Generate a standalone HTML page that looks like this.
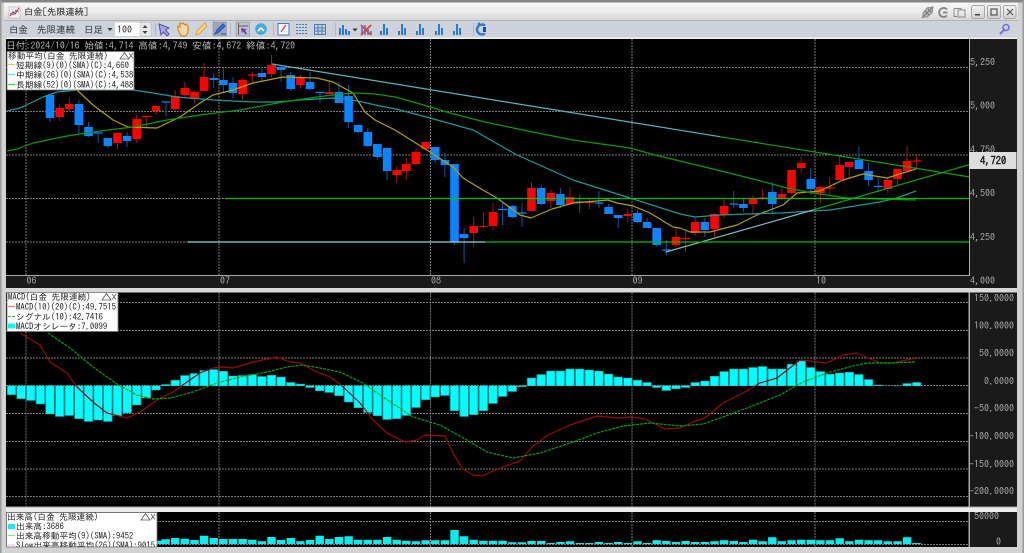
<!DOCTYPE html>
<html lang="ja"><head><meta charset="utf-8"><title>白金[先限連続]</title>
<style>
html,body{margin:0;padding:0;width:1024px;height:553px;overflow:hidden;background:#d4d4d4}
svg{display:block;position:absolute;left:0;top:0;filter:blur(.3px)}
text{font-family:"IPAGothic","Liberation Sans","Noto Sans CJK JP",sans-serif}
.ax{fill:#a8a8a8;font-size:10px}
.lg{fill:#222;font-size:8.7px}
.tb{fill:#333;font-size:9.5px}
</style></head><body>
<svg width="1024" height="553" viewBox="0 0 1024 553" xmlns="http://www.w3.org/2000/svg">
<defs>
<linearGradient id="tg" x1="0" y1="0" x2="0" y2="1"><stop offset="0" stop-color="#f6f6f6"/><stop offset=".5" stop-color="#ececec"/><stop offset="1" stop-color="#d6d6d6"/></linearGradient>
<linearGradient id="bt" x1="0" y1="0" x2="0" y2="1"><stop offset="0" stop-color="#f4f4f4"/><stop offset="1" stop-color="#cfcfcf"/></linearGradient>
<clipPath id="c1"><rect x="6" y="39" width="963" height="236"/></clipPath>
<clipPath id="c3"><rect x="7" y="512" width="150" height="35"/></clipPath>
</defs>
<!-- frame -->
<rect width="1024" height="553" fill="#d2d2d2"/>
<rect width="1024" height="2.5" fill="#858585"/>
<rect x="4" y="2.5" width="1014" height="18" fill="url(#tg)"/>
<rect x="4" y="20" width="1014" height="1" fill="#b4b4b4"/>
<rect x="6" y="21" width="1011" height="17" fill="#ced2da"/>
<rect x="0" y="0" width="1.5" height="553" fill="#9a9a9a"/>
<rect x="1022.5" y="0" width="1.5" height="553" fill="#9a9a9a"/>
<rect x="6" y="37.5" width="1011" height="1.5" fill="#f2f2f2"/>
<!-- title -->
<rect x="9" y="7" width="11" height="11" fill="#f4f4f4" stroke="#a8a8a8" stroke-width=".6"/>
<path d="M10 16l3-4 2 2 4-6" fill="none" stroke="#d03030" stroke-width="1.1"/>
<path d="M10 13l3 2 3-5 3 2" fill="none" stroke="#3060c0" stroke-width=".7"/>
<text x="24" y="15" fill="#222" font-size="9.2">白金[先限連続]</text>
<!-- title right icons -->
<g fill="none" stroke="#8a8a8a" stroke-width="1.5">
<path d="M923 13l4-5 6-1-1 6-5 4-4 0z" fill="#b8b8b8" stroke-width="1"/>
<path d="M922 18l11-11M925 11l4 4M928 9l3 3" stroke="#777" stroke-width="1"/>
<path d="M947 9.500a4.500 4.500 0 1 0 0 6M943 12.500h4.500" stroke-width="2"/>
<path d="M954 8.500h7v2M954 8.500v8h3" stroke-width="1"/>
<rect x="958" y="10" width="7" height="7" stroke-width="1"/>
</g>
<g stroke="#a8a8a8" stroke-width="1" fill="url(#bt)">
<rect x="971.500" y="5.500" width="13" height="13" rx="2"/>
<rect x="987.500" y="5.500" width="13" height="13" rx="2"/>
<rect x="1003.500" y="5.500" width="12.500" height="13" rx="2"/>
</g>
<rect x="975" y="14" width="5" height="1.500" fill="#444"/>
<rect x="991" y="9" width="6" height="6" fill="none" stroke="#555" stroke-width="1.200"/>
<path d="M1007 9l6 6M1013 9l-6 6" stroke="#555" stroke-width="1.200"/>
<!-- toolbar text -->
<text class="tb" x="9" y="33" font-size="9.500">白金</text>
<text class="tb" x="37" y="33">先限連続</text>
<text class="tb" x="84" y="33">日足</text>
<path d="M107.500 28h5l-2.500 3z" fill="#333"/>
<rect x="115" y="22.500" width="25" height="13.500" fill="#fff"/>
<text x="117" y="33" fill="#333" font-size="10">100</text>
<rect x="140" y="22.500" width="11" height="13.500" fill="#e8e8e8" stroke="#bbb" stroke-width=".5"/>
<path d="M142.500 28l2.500-3 2.500 3zM142.500 31l2.500 3 2.500-3z" fill="#444"/>
<path d="M155.500 23v13M230.500 23v13M273.500 23v13M335.500 23v13M473.500 23v13" stroke="#b4b8c2" stroke-width="1"/>
<!-- tool icons -->
<path d="M159 24l10 4-3.500 2 3.500 4-2 2-3.500-4-2.500 3z" fill="#a9a4e8" stroke="#5a509f" stroke-width="1"/>
<path d="M178 30v-4l2 1v-4l2 1 1-1 2 2 1-1 2 2v6l-2 4h-5z" fill="#f4d9a8" stroke="#c98a30" stroke-width="1.200"/>
<path d="M196 35l1-4 8-8 2 3-8 8z" fill="#f6d888" stroke="#dba040" stroke-width="1"/>
<rect x="213" y="22" width="13.500" height="14" fill="#9da6b6" stroke="#8a93a6" stroke-width=".6"/>
<path d="M215 34l2-4 6-6 2 2-6 6zM221 34h5" fill="#3a6ed8" stroke="#2a50b0" stroke-width="1"/>
<rect x="236" y="22" width="13.500" height="14" fill="#bcc2cd" stroke="#8f97a6" stroke-width=".6"/>
<path d="M238.500 23v12M238.500 26h10" stroke="#705a60" stroke-width="1" fill="none"/>
<path d="M241 28l6 1.500-2 1 2 3-1.500 1-2-3-1.500 1.500z" fill="#6a40a8"/>
<circle cx="261" cy="29" r="5.800" fill="#48a8e0"/>
<path d="M258 31l3-3 3 3" fill="none" stroke="#fff" stroke-width="1.600"/>
<rect x="278" y="23.500" width="11" height="11.500" fill="#f4f6fa" stroke="#4a78c0" stroke-width="1"/>
<path d="M281 32l2-3 3-4" fill="none" stroke="#e05050" stroke-width="1.400"/>
<g fill="none" stroke="#4a78b8" stroke-width="1">
<path d="M296 24.500h12M296 27.500h12M296 30.500h12M296 33.500h12" stroke-dasharray="2 1"/>
<path d="M314.500 24.500h11v10h-11zM314.500 28h11M314.500 31h11M318 24.500v10M322 24.500v10"/>
</g>
<g fill="#2b78d8">
<path d="M339 28h2v7h-2zM342 25h2v10h-2zM345 29h2v6h-2zM348 31h2v4h-2z"/>
<path d="M361 27h2v8h-2zM364 25h2v10h-2zM367 29h2v6h-2zM370 31h2v4h-2z" opacity=".75"/>
<path d="M380 31h2v4h-2zM383 24h2v11h-2zM386 28h2v7h-2z"/>
<path d="M398 31h2v4h-2zM401 24h2v11h-2zM404 28h2v7h-2z"/>
<path d="M416 31h2v4h-2zM419 24h2v11h-2zM422 28h2v7h-2z"/>
<path d="M435 31h2v4h-2zM438 24h2v11h-2zM441 28h2v7h-2z"/>
<path d="M453 31h2v4h-2zM456 24h2v11h-2zM459 28h2v7h-2z"/>
</g>
<path d="M352.500 28.500h5l-2.500 3z" fill="#333"/>
<path d="M361 25l10 10M371 25l-10 10" stroke="#e04040" stroke-width="1.800"/>
<path d="M485 25.500a5 5 0 1 0 0 8" fill="none" stroke="#2a7ad0" stroke-width="2.400"/>
<path d="M477 24l3-2v4z" fill="#2a7ad0"/><path d="M483 27h3v5h-3z" fill="#1a50a0"/>
<path d="M1000 34l5-5" stroke="#7a6ae0" stroke-width="2"/><circle cx="1006" cy="27.500" r="3" fill="none" stroke="#7a6ae0" stroke-width="1.600"/>
<!-- panels -->
<rect x="6" y="39" width="1011" height="249" fill="#1a1a1a"/>
<rect x="6" y="39" width="963" height="236" fill="#000"/>
<rect x="6" y="275" width="964" height="1" fill="#a8a8a8"/>
<rect x="969" y="39" width="1" height="237" fill="#a8a8a8"/>
<rect x="6" y="288" width="1011" height="4.500" fill="#d8d8d8"/>
<rect x="6" y="292.500" width="1011" height="215" fill="#1a1a1a"/>
<rect x="6" y="292.500" width="963" height="214.500" fill="#000"/>
<rect x="968.500" y="292.500" width="1.500" height="215" fill="#a8a8a8"/>
<rect x="6" y="506.500" width="1011" height="1" fill="#a8a8a8"/>
<rect x="6" y="507.500" width="1011" height="4.500" fill="#ececec"/>
<rect x="6" y="512" width="1011" height="35" fill="#1a1a1a"/>
<rect x="6" y="512" width="963" height="35" fill="#000"/>
<rect x="968.500" y="512" width="1.500" height="35" fill="#a8a8a8"/>
<!-- grids -->
<g stroke="#7a7a7a" stroke-width="1" stroke-dasharray="2 1" fill="none">
<path d="M6 67.500h963M6 111.500h963M6 155h963M6 198.500h963M6 242h963"/>
<path d="M26 39v236M219 39v236M430.500 39v236M632 39v236M815 39v236"/>
<path d="M6 302.500h963M6 330.500h963M6 358h963M6 385.500h963M6 413.500h963M6 441.500h963M6 469h963M6 496.500h963"/>
<path d="M26 292.500v214.500M219 292.500v214.500M430.500 292.500v214.500M632 292.500v214.500M815 292.500v214.500"/>
<path d="M6 521.500h963M6 544.500h963"/>
<path d="M26 512v35M219 512v35M430.500 512v35M632 512v35M815 512v35"/>
</g>
<!-- info line -->
<text x="6" y="49" fill="#b4b4b4" font-size="9.800">日付:2024/10/16 始値:4,714 高値:4,749 安値:4,672 終値:4,720</text>
<!-- candle wicks -->
<path fill="none" stroke="#0a5aa8" stroke-width="1" d="M50 95V122M78.900 100V134M88.500 122V137M98.200 133V143M107.800 138V148M127.100 132V147M166 102V116M213.700 73V88M223.400 68V92M233 77V98M261.900 67V82M281.100 65V82M290.800 72V91M310 72V91M320 92V103M338.900 82V103M348.600 85V128M358.200 125V134M367.800 128V147M377.400 144V160M387.100 148V180M435.200 147V163M444.900 153V177M454.500 164V245M464.100 228V263M502.600 203V225M512.300 205V218M522 203V227M541.200 185V205M560.400 188V208M579.700 195V213M598.900 191V208M608.600 204V214M618.200 215V228M637.500 210V223M647.100 218V228M656.700 228V247M666.300 240V255M704.900 218V237M733.800 191V208M743.400 199V212M772.300 182V214M810.800 168V195M858.900 147V169M868.600 163V186M878.200 177V192"/>
<path fill="none" stroke="#a01818" stroke-width="1" d="M59.700 104V121M69.300 98V112M117.400 133V149M136.700 115V143M146.300 116V127M156 105V115M175.200 90V111M184.800 82V97M194.500 90V103M204.100 63V91M242.600 78V100M252.300 72V83M271.500 55V77M300.400 75V88M329.300 82V94M396.700 166V183M406.300 158V180M416 148V164M425.600 142V150M473.700 217V247M483.400 212V228M493 203V230M531.500 182V211M550.800 190V208M570 187V205M589.300 199V209M627.800 209V222M676 228V247M685.600 229V252M695.200 218V236M714.500 213V237M724.100 199V218M753 195V214M762.600 189V200M781.900 187V200M791.500 170V194M801.200 157V172M820.400 186V203M829.800 177V195M839.700 155V180M849.300 162V178M887.800 177V193M897.500 169V186M907.100 146V172M916.700 155V168"/>
<!-- candle bodies -->
<path fill="none" stroke="#0a84ff" stroke-width="8.600" d="M50 95V118M78.900 104V125M88.500 127V136M107.800 138V146M127.100 136V141M213.700 78V80M223.400 80V85M233 83V93M261.900 73V77M281.100 67V70M290.800 75V89M310 82V89M338.900 92V103M348.600 96V122M358.200 125V132M367.800 132V146M377.400 144V157M387.100 148V171M435.200 147V160M444.900 160V165M454.500 164V242M464.100 234V238M512.300 206V217M541.200 188V204M560.400 194V205M608.600 207V214M618.200 215V218M637.500 213V222M647.100 222V228M656.700 228V245M704.900 222V230M743.400 204V208M772.300 192V204M810.800 179V189M858.900 160V169M868.600 171V180"/>
<path fill="none" stroke="#0a84ff" stroke-width="1.200" d="M94 133h9M161.500 102h9M315.500 92.500h9M498 209.500h9M517.500 213h9M575 202h9M594.500 203h9M662 250h9M729.500 204h9M873.800 186.500h9"/>
<path fill="none" stroke="#ff0000" stroke-width="8.600" d="M59.700 108V117M69.300 104V109M117.400 133V143M136.700 119V139M156 106V111M175.200 96V109M184.800 88V95M194.500 92V99M204.100 77V91M242.600 80V94M271.500 65V74M300.400 78V85M329.300 92V94M396.700 170V175M406.300 164V171M416 152V164M425.600 142V149M473.700 226V233M483.400 226V227M493 212V226M531.500 188V211M550.800 193V201M570 197V204M627.800 214V216M676 237V245M695.200 222V233M714.500 214V229M724.100 206V215M753 199V204M781.900 194V198M791.500 170V193M801.200 163V168M820.400 187V193M839.700 165V180M849.300 162V167M887.800 180V189M897.500 169V179M907.100 161V171"/>
<path fill="none" stroke="#ff0000" stroke-width="1.200" d="M142 116.500h9M248 75h9M585 202.500h9M681.300 238.500h9M758.300 198h9M825.500 188h9M912.400 161h9"/>
<!-- MAs -->
<g fill="none" stroke-width="1.200" stroke-linejoin="round" clip-path="url(#c1)">
<polyline stroke="#b0a010" points="77,90 93,105 113,120 128,127 157,128 180,117 200,103 213,95 233,90 253,83 283,77 317,78 333,82 353,93 365,112 375,120 395,130 430,152 453,167 463,178 483,190 497,198 520,215 531,218 552,209 573,203 597,201 608,200 617,203 633,206 650,213 673,227 680,228 690,232 710,232 737,225 757,215 783,205 797,193 820,191 843,180 863,174 887,178 916,169"/>
<polyline stroke="#1a9a9a" points="7,111 20,108 43,97 57,92 77,90 133,90 153,93 177,97 213,100 253,102 277,102 300,100 333,98 347,99 362,102 380,106 400,110 430,118 473,130 517,155 573,180 630,198 680,214 695,217 720,215 747,214 780,213 830,210 880,202 897,198 916,191"/>
<polyline stroke="#0a9a0a" points="7,151 17,149 33,143 67,136 100,131 133,127 167,120 207,114 240,110 283,102 317,97 340,94 357,93 375,94 395,97 420,104 450,113 485,122 523,130 573,140 630,148 655,155 680,161 713,169 757,180 787,188 813,193 847,198 880,199 916,200"/>
<!-- trend lines -->
<path stroke="#5ab4bc" d="M272 64L720 136.700"/>
<path stroke="#10a010" d="M720 136.700L970 177"/>
<path stroke="#7ab8c0" d="M666 252L813 210"/>
<path stroke="#10a010" d="M813 210L970 164.500"/>
<path stroke="#00c000" d="M226 198.500H970"/>
<path stroke="#8ad8d8" d="M188 242H485"/>
<path stroke="#00c000" d="M485 242H970"/>
</g>
<!-- main legend -->
<rect x="7" y="51.500" width="127" height="38.500" fill="#fff" stroke="#777" stroke-width=".8"/>
<text class="lg" x="8" y="59">移動平均(白金 先限連続)</text>
<path d="M120 59l4.500-6.500 4.500 6.500z" fill="none" stroke="#555" stroke-width=".8"/><path d="M129 53l4 5.500M133 53l-4 5.500" stroke="#555" stroke-width=".7"/>
<path d="M8 64.500h7" stroke="#e0d830" stroke-width="1"/><text class="lg" x="16" y="68.500">短期線(9)(0)(SMA)(C):4,660</text>
<path d="M8 74.500h7" stroke="#70e0e8" stroke-width="1.500"/><text class="lg" x="16" y="78">中期線(26)(0)(SMA)(C):4,538</text>
<path d="M8 84.500h7" stroke="#30e030" stroke-width="1"/><text class="lg" x="16" y="88">長期線(52)(0)(SMA)(C):4,488</text>
<!-- price axis -->
<text class="ax" x="970" y="65.500">5,250</text>
<text class="ax" x="970" y="109">5,000</text>
<text class="ax" x="970" y="153">4,750</text>
<text class="ax" x="970" y="196.500">4,500</text>
<text class="ax" x="970" y="240.500">4,250</text>
<text class="ax" x="970" y="284">4,000</text>
<rect x="969" y="152" width="47.500" height="17" fill="#dedede"/>
<text x="980" y="164.500" fill="#222" font-size="10.500" font-weight="bold">4,720</text>
<g class="ax"><text class="ax" x="26.500" y="284">06</text><text class="ax" x="220" y="284">07</text><text class="ax" x="431" y="284">08</text><text class="ax" x="632.500" y="284">09</text><text class="ax" x="816" y="284">10</text></g>
<!-- MACD bars -->
<g fill="none">
<path id="mb" stroke="#0a8f90" stroke-width="9.400" d="M11.500 385.700V395M21.100 385.700V399M30.800 385.700V400.700M40.400 385.700V404.300M50 385.700V414.300M59.700 385.700V416.700M69.300 385.700V415.700M78.900 385.700V419M88.500 385.700V421.700M98.200 385.700V420.300M107.800 385.700V421.700M117.400 385.700V416M127.100 385.700V413.300M136.700 385.700V405.300M146.300 385.700V398.300M156 385.700V390.300M165.600 385.700V384.300M175.200 385.700V380M184.800 385.700V375.300M194.500 385.700V373.300M204.100 385.700V370.300M213.700 385.700V369.300M223.400 385.700V371M233 385.700V375.700M242.600 385.700V375.300M252.300 385.700V374.300M261.900 385.700V376.300M271.500 385.700V375M281.100 385.700V376.700M290.800 385.700V382.300M300.400 385.700V383.700M310 385.700V387.700M319.700 385.700V391M329.300 385.700V392.700M338.900 385.700V396M348.600 385.700V402.300M358.200 385.700V408M367.800 385.700V412.700M377.400 385.700V416M387.100 385.700V419.700M396.700 385.700V419M406.300 385.700V415.700M416 385.700V407.700M425.600 385.700V400M435.200 385.700V397.300M444.900 385.700V395.700M454.500 385.700V411M464.100 385.700V416.700M473.700 385.700V415M483.400 385.700V411M493 385.700V403.700M502.600 385.700V396.700M512.300 385.700V391.700M521.900 385.700V387M531.500 385.700V377.700M541.200 385.700V374.300M550.800 385.700V370.700M560.400 385.700V370.700M570 385.700V368.700M579.700 385.700V368.700M589.300 385.700V369.700M598.900 385.700V370.700M608.600 385.700V373.700M618.200 385.700V376.700M627.800 385.700V377.700M637.500 385.700V380M647.100 385.700V382.300M656.700 385.700V387.700M666.300 385.700V390.700M676 385.700V389M685.600 385.700V387.700M695.200 385.700V382.300M704.900 385.700V380.700M714.500 385.700V376M724.100 385.700V371.300M733.800 385.700V368.700M743.400 385.700V368.700M753 385.700V367.300M762.600 385.700V366.300M772.300 385.700V368.700M781.900 385.700V368.700M791.500 385.700V364M801.200 385.700V360.700M810.800 385.700V367.300M820.400 385.700V371.300M830.100 385.700V374M839.700 385.700V372.700M849.300 385.700V372M858.900 385.700V374.300M868.600 385.700V379.300M878.200 385.700V384.700M887.800 385.700V386M897.500 385.700V386.300M907.100 385.700V383.300M916.700 385.700V382.300"/>
<path stroke="#00ffff" stroke-width="7.800" d="M11.500 385.700V394.500M21.100 385.700V398.500M30.800 385.700V400.200M40.400 385.700V403.800M50 385.700V413.800M59.700 385.700V416.200M69.300 385.700V415.200M78.900 385.700V418.500M88.500 385.700V421.200M98.200 385.700V419.800M107.800 385.700V421.200M117.400 385.700V415.500M127.100 385.700V412.800M136.700 385.700V404.800M146.300 385.700V397.800M156 385.700V389.800M165.600 385.700V384.800M175.200 385.700V380.500M184.800 385.700V375.800M194.500 385.700V373.800M204.100 385.700V370.800M213.700 385.700V369.800M223.400 385.700V371.500M233 385.700V376.200M242.600 385.700V375.800M252.300 385.700V374.800M261.900 385.700V376.800M271.500 385.700V375.500M281.100 385.700V377.200M290.800 385.700V382.800M300.400 385.700V384.200M310 385.700V387.200M319.700 385.700V390.500M329.300 385.700V392.200M338.900 385.700V395.500M348.600 385.700V401.800M358.200 385.700V407.500M367.800 385.700V412.200M377.400 385.700V415.500M387.100 385.700V419.200M396.700 385.700V418.500M406.300 385.700V415.200M416 385.700V407.200M425.600 385.700V399.500M435.200 385.700V396.800M444.900 385.700V395.200M454.500 385.700V410.500M464.100 385.700V416.200M473.700 385.700V414.500M483.400 385.700V410.500M493 385.700V403.200M502.600 385.700V396.200M512.300 385.700V391.200M521.900 385.700V386.500M531.500 385.700V378.200M541.200 385.700V374.800M550.800 385.700V371.200M560.400 385.700V371.200M570 385.700V369.200M579.700 385.700V369.200M589.300 385.700V370.200M598.900 385.700V371.200M608.600 385.700V374.200M618.200 385.700V377.200M627.800 385.700V378.200M637.500 385.700V380.500M647.100 385.700V382.800M656.700 385.700V387.200M666.300 385.700V390.200M676 385.700V388.500M685.600 385.700V387.200M695.200 385.700V382.800M704.900 385.700V381.200M714.500 385.700V376.500M724.100 385.700V371.800M733.800 385.700V369.200M743.400 385.700V369.200M753 385.700V367.800M762.600 385.700V366.800M772.300 385.700V369.200M781.900 385.700V369.200M791.500 385.700V364.500M801.200 385.700V361.200M810.800 385.700V367.800M820.400 385.700V371.800M830.100 385.700V374.500M839.700 385.700V373.200M849.300 385.700V372.500M858.900 385.700V374.800M868.600 385.700V379.800M878.200 385.700V385.200M907.100 385.700V383.800M916.700 385.700V382.800"/>
<polyline stroke="#9a0a0a" stroke-width="1.200" stroke-linejoin="round" points="20,333 40,345 50,362 67,373 77,387 93,402 107,413 127,418 140,412 157,400 173,392 187,382 200,373 213,368 223,367 233,368 253,362 277,357 290,362 300,363 317,372 330,377 340,384 360,403 373,420 387,433 405,442 417,440 425,435 445,436 455,457 463,469 473,475 482,476 500,468 520,461 532,447 548,435 570,425 597,416 617,418 630,417 645,419 665,429 680,428 693,422 705,418 723,403 743,393 760,383 777,378 800,360 827,363 843,355 857,353 880,363 893,363 915,358"/>
<polyline stroke="#0aa00a" stroke-width="1.200" stroke-dasharray="3 1" stroke-linejoin="round" points="48,333 70,348 93,367 117,384 137,395 153,399 170,398 193,392 217,383 240,377 267,372 287,367 303,365 320,368 340,372 363,383 383,397 413,417 440,425 467,440 487,452 513,458 540,453 573,442 597,433 623,426 650,423 680,426 703,424 723,417 747,408 780,395 803,382 827,373 853,366 867,363 890,363 915,362"/>
</g>
<!-- MACD legend -->
<rect x="7" y="292.500" width="111" height="39" fill="#fff" stroke="#777" stroke-width=".8"/>
<text class="lg" x="8" y="300">MACD(白金 先限連続)</text>
<path d="M102 300l4.500-6.500 4.500 6.500z" fill="none" stroke="#555" stroke-width=".8"/><path d="M112 294l4 5.500M116 294l-4 5.500" stroke="#555" stroke-width=".7"/>
<path d="M8 306.500h7" stroke="#f08080" stroke-width="1.300"/><text class="lg" x="16" y="310">MACD(10)(20)(C):49.7515</text>
<path d="M8 316.500h7" stroke="#40c040" stroke-width="1" stroke-dasharray="3 1"/><text class="lg" x="16" y="320">シグナル(10):42.7416</text>
<rect x="8" y="323.500" width="7" height="5" fill="#00ffff"/><text class="lg" x="16" y="329.500">MACDオシレータ:7.0099</text>
<!-- MACD axis -->
<g text-anchor="end">
<text class="ax" x="1014" y="301.500">150.0000</text>
<text class="ax" x="1014" y="329">100.0000</text>
<text class="ax" x="1014" y="356.500">50.0000</text>
<text class="ax" x="1014" y="384.500">0.0000</text>
<text class="ax" x="1014" y="411.500">-50.0000</text>
<text class="ax" x="1014" y="439.500">-100.0000</text>
<text class="ax" x="1014" y="467.500">-150.0000</text>
<text class="ax" x="1014" y="494.500">-200.0000</text>
</g>
<!-- Volume bars -->
<path fill="none" stroke="#00f0f0" stroke-width="8.400" d="M161.400 544V540.700M165.600 544V539.300M175.200 544V538M184.800 544V538.700M194.500 544V540M204.100 544V535.700M213.700 544V538M223.400 544V539M233 544V539M242.600 544V539M252.300 544V539.700M261.900 544V541.300M271.500 544V537M281.100 544V540M290.800 544V538M300.400 544V541.300M310 544V540M319.700 544V535.700M329.300 544V539M338.900 544V537M348.600 544V536.300M358.200 544V539.700M367.800 544V539.700M377.400 544V539.700M387.100 544V537M396.700 544V539.700M406.300 544V540.700M416 544V541.300M425.600 544V540.300M435.200 544V540.300M444.900 544V540.300M454.500 544V530M464.100 544V536.300M473.700 544V539.700M483.400 544V540.700M493 544V540.700M502.600 544V540.700M512.300 544V542.300M521.900 544V542.300M531.500 544V541M541.200 544V541M550.800 544V543M560.400 544V542M570 544V541.300M579.700 544V543M589.300 544V543M598.900 544V542M608.600 544V543M618.200 544V542M627.800 544V543M637.500 544V541.300M647.100 544V543M656.700 544V540.300M666.300 544V541M676 544V542M685.600 544V541M695.200 544V542M704.900 544V542M714.500 544V541.300M724.100 544V540.300M733.800 544V541M743.400 544V542M753 544V539.700M762.600 544V541.300M772.300 544V537.300M781.900 544V541.300M791.500 544V540.300M801.200 544V539.700M810.800 544V539.700M820.400 544V540.300M830.100 544V540.300M839.700 544V538.300M849.300 544V541.300M858.900 544V539.700M868.600 544V540.300M878.200 544V540.300M887.800 544V541.300M897.500 544V541.300M907.100 544V537.300M916.700 544V543"/>
<!-- Volume legend -->
<rect x="6.500" y="512.500" width="150.500" height="34.500" fill="#fff" stroke="#777" stroke-width=".8"/>
<g clip-path="url(#c3)">
<text class="lg" x="7" y="520">出来高(白金 先限連続)</text>
<path d="M141 520l4.500-6.500 4.500 6.500z" fill="none" stroke="#555" stroke-width=".8"/><path d="M151 514l4 5.500M155 514l-4 5.500" stroke="#555" stroke-width=".7"/>
<rect x="8" y="524" width="7" height="5" fill="#20e8f0"/><text class="lg" x="16" y="529.500">出来高:3686</text>
<path d="M8 535.500h7" stroke="#80e880" stroke-width="1"/><text class="lg" x="16" y="539">出来高移動平均(9)(SMA):9452</text>
<path d="M8 545h7" stroke="#f0b0f0" stroke-width="1"/><text class="lg" x="16" y="548.500">Slow出来高移動平均(26)(SMA):9015</text>
</g>
<text class="ax" x="974" y="519.500">50000</text>
<text class="ax" x="996" y="545">0</text>
</svg>
</body></html>
